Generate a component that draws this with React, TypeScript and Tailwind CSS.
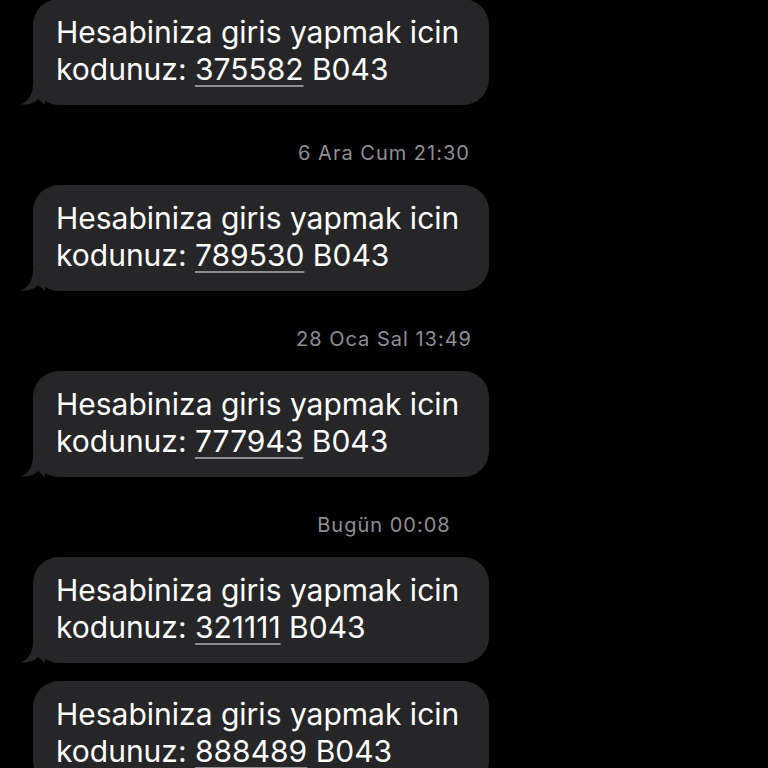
const messages = [
  { code: "375582", stamp: "6 Ara Cum 21:30" },
  { code: "789530", stamp: "28 Oca Sal 13:49" },
  { code: "777943", stamp: "Bugün 00:08" },
  { code: "321111", stamp: null },
  { code: "888489", stamp: null },
];

const Tail = () => (
  <svg
    className="absolute -left-[12px] bottom-0"
    width="24"
    height="22"
    viewBox="0 0 24 22"
  >
    <path d="M12 0 C12 10 9 17 0 21.5 C8 22 14 19.5 17 16 L24 22 L24 0 Z" fill="#262628" />
  </svg>
);

const Bubble = ({ code, tail }: { code: string; tail: boolean }) => (
  <div className="relative ml-[33px] w-[456px] rounded-[26px] bg-[#262628] pl-[23px] pt-[15px] pb-[17px] text-[30px] leading-[37px] text-white">
    <p>Hesabiniza giris yapmak icin</p>
    <p>
      kodunuz:{" "}
      <span className="underline decoration-[#8c8c90] decoration-2 underline-offset-[5px]">{code}</span>{" "}
      B043
    </p>
    {tail && <Tail />}
  </div>
);

export default function App() {
  return (
    <div
      className="h-[768px] w-[768px] overflow-hidden bg-black"
      style={{ fontFamily: "Inter, 'Noto Sans', sans-serif" }}
    >
      <div className="-mt-px flex flex-col">
        {messages.map((m, i) => (
          <div key={m.code}>
            <Bubble code={m.code} tail={i !== messages.length - 1} />
            {m.stamp ? (
              <div className="pt-[36px] pb-[20px] text-center text-[20px] leading-[24px] tracking-[1px] text-[#8e8e93]">
                {m.stamp}
              </div>
            ) : (
              <div className="h-[18px]" />
            )}
          </div>
        ))}
      </div>
    </div>
  );
}
